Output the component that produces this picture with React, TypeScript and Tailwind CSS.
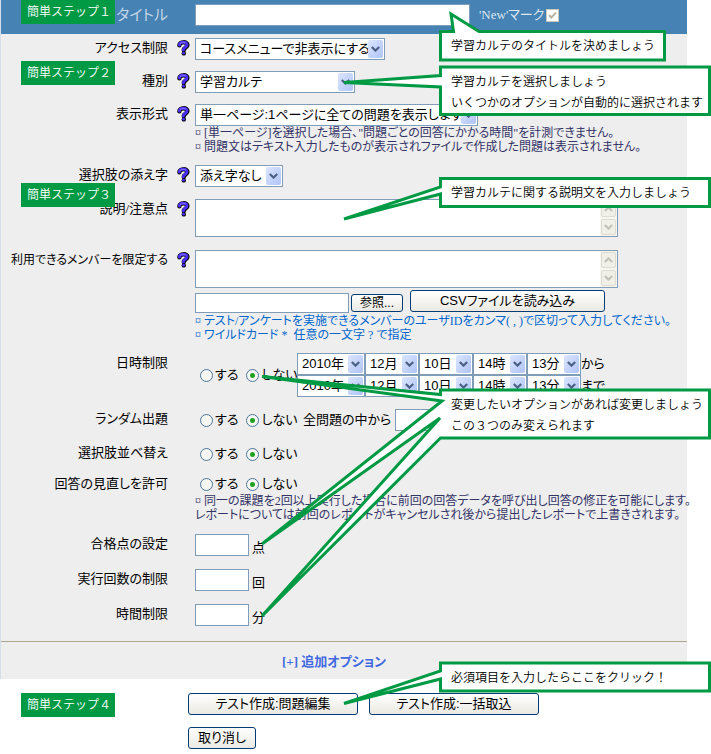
import { ReactNode } from "react";
import clsx from "clsx";

const serif = "font-['Liberation_Serif','Noto_Sans_CJK_JP',serif]";
const sans = "font-['Liberation_Sans','Noto_Sans_CJK_JP',sans-serif]";
const callout = "font-['Noto_Sans_CJK_JP',sans-serif] font-[350] [font-feature-settings:normal]";

const HelpIcon = () => (
    <svg width="13" height="16" viewBox="0 0 13 16" fill="none" strokeLinecap="round" strokeLinejoin="round" aria-hidden="true">
        <path d="M2.4 5.2C2.4 1.6 10.4 1.2 10.4 5C10.4 7.6 6.8 7.4 6.8 10" stroke="#000" strokeWidth="4.4" />
        <circle cx="6.8" cy="13.4" r="2.2" fill="#000" />
        <path d="M2.4 5C2.4 1.4 10 1.2 10 4.8C10 7.2 6.4 7.2 6.4 9.8" stroke="#4a2df5" strokeWidth="3" />
        <path d="M3 3.6C4.5 2 7 2 8.6 2.8" stroke="#9488ff" strokeWidth="0.8" />
        <circle cx="6.6" cy="13.2" r="1.4" fill="#4a2df5" />
    </svg>
);

const Chevron = ({ up = false, color = "#4d6185" }: { up?: boolean, color?: string }) => (
    <svg width="9" height="6" viewBox="0 0 9 6" fill="none" stroke={color} strokeWidth="2.2">
        <path d={up ? "M0.8 5L4.5 1.4L8.2 5" : "M0.8 1L4.5 4.6L8.2 1"} />
    </svg>
);

interface RowProps {
    label: string,
    htmlFor?: string,
    id?: string,
    help?: boolean,
    small?: boolean,
    className?: string,
    children: ReactNode
}

const Row = ({ label, htmlFor, id, help, small, className, children }: RowProps) => {
    return <div className={clsx("flex items-start", className)}>
        <label htmlFor={htmlFor} id={id} className={clsx("w-[167px] shrink-0 text-right whitespace-nowrap", small ? "text-xs/5" : "leading-5")}>{label}</label>
        <div className="flex w-[27px] h-5 shrink-0 items-center justify-center pl-1">{help && <HelpIcon />}</div>
        <div className="flex-1 min-w-0">{children}</div>
    </div>
}

const Select = ({ id, value, label, width }: { id?: string, value: string, label?: string, width: string }) => {
    return <div className={clsx("relative h-[22px] shrink-0", width)}>
        <select id={id} aria-label={label} defaultValue={value} className={clsx("block w-full h-full appearance-none border border-[#7f9db9] bg-white pl-1 text-[13px] leading-5 outline-none", sans)}>
            <option>{value}</option>
        </select>
        <span className="pointer-events-none absolute top-0.5 right-0.5 bottom-0.5 flex w-[15px] items-center justify-center rounded-xs bg-linear-to-br from-[#dbe5ff] to-[#afc4f5]">
            <Chevron />
        </span>
    </div>
}

const TextArea = ({ id }: { id: string }) => {
    return <div className="flex h-[38px] max-w-[423px] border border-[#7f9db9] bg-white">
        <textarea id={id} className="flex-1 resize-none overflow-hidden outline-none" />
        <div className="flex w-[17px] flex-col gap-0.5 bg-[#f7f6f1] p-px" aria-hidden="true">
            <span className="flex flex-1 items-center justify-center rounded-xs border border-[#dedccf] bg-[#f1f0e8]"><Chevron up color="#c5c3b8" /></span>
            <span className="flex flex-1 items-center justify-center rounded-xs border border-[#dedccf] bg-[#f1f0e8]"><Chevron color="#c5c3b8" /></span>
        </div>
    </div>
}

const Radio = ({ name, text, checked }: { name: string, text: string, checked?: boolean }) => {
    return <label className="flex items-center gap-0.5 whitespace-nowrap">
        <input
            type="radio"
            name={name}
            defaultChecked={checked}
            className="size-[13px] appearance-none rounded-full border border-[#4a769c] bg-[#f6f6f3] checked:bg-[radial-gradient(circle,#21a121_0,#21a121_2px,#f6f6f3_3px)]"
        />
        {text}
    </label>
}

const YesNo = ({ name, labelledBy }: { name: string, labelledBy: string }) => {
    return <div role="radiogroup" aria-labelledby={labelledBy} className="flex w-[102px] shrink-0 items-center gap-2 pl-[5px]">
        <Radio name={name} text="する" />
        <Radio name={name} text="しない" checked />
    </div>
}

const XpButton = ({ children, className }: { children: ReactNode, className: string }) => {
    return <button type="button" className={clsx("rounded-[3px] border border-[#003c74] bg-linear-to-b from-white to-[#eae9e2] whitespace-nowrap", sans, className)}>{children}</button>
}

const Notes = ({ lines, className }: { lines: string[], className: string }) => {
    return <div className={clsx("text-xs leading-[14px] whitespace-nowrap", className)}>
        {lines.map(line => <p key={line}>{line}</p>)}
    </div>
}

const NumberRow = ({ label, id, unit, className }: { label: string, id: string, unit: string, className: string }) => {
    return <Row label={label} htmlFor={id} className={className}>
        <div className="flex items-end gap-[3px]">
            <input id={id} type="text" className="h-[22px] w-[54px] border border-[#7f9db9] bg-white px-1 outline-none" />
            <span className="leading-4">{unit}</span>
        </div>
    </Row>
}

const Badge = ({ text, className }: { text: string, className: string }) => {
    return <div className={clsx("absolute left-[21px] h-6 w-[94px] bg-[#009944] pl-1.5 text-xs leading-[22px] whitespace-nowrap text-white", callout, className)}>{text}</div>
}

const Callout = ({ lines, className }: { lines: string[], className: string }) => {
    return <div className={clsx("absolute left-[451px] text-xs leading-[21px] whitespace-nowrap text-black", callout, className)}>
        {lines.map(line => <p key={line}>{line}</p>)}
    </div>
}

const bubbles = [
    "M440.5 31.5H453.5L451 14L479 31.5H664.5V60H440.5Z",
    "M440.5 67H709.5V114.5H440.5V87L344 82.5L440.5 75.5Z",
    "M440.5 178.5H709.5V206.5H440.5V194L344 219L440.5 187Z",
    "M440.5 390H709.5V438H440.5L262 616L440 418L262 544L442 401L262 376.5L440.5 394.5Z",
    "M440.5 663H709.5V691H440.5V679L344 703.5L440.5 671Z",
];

const dateParts = ["2010年", "12月", "10日", "14時", "13分"];
const units = ["年", "月", "日", "時", "分"];

const DateLine = ({ prefix, suffix }: { prefix: string, suffix: string }) => {
    return <div className="flex items-center">
        {dateParts.map((value, i) => (
            <Select key={value} value={value} label={prefix + units[i]} width={i === 0 ? "w-[68px]" : "w-[54px]"} />
        ))}
        <span className="whitespace-nowrap">{suffix}</span>
    </div>
}

export default function App() {
    return <div className={clsx("relative text-[13px] text-black [font-feature-settings:'palt']", serif)}>
        <form>
            <div className="mr-6 border-l border-[#d5dfea] bg-[#eeeeee]">
                <div className="flex h-[34px] items-center bg-[#4682b4] pb-1 text-[#dbe7f2]">
                    <label htmlFor="title" className="w-[167px] shrink-0 text-right text-[15px] text-[#c3d6e7]">タイトル</label>
                    <input id="title" type="text" className="ml-[27px] h-[22px] w-[275px] border border-[#7f9db9] bg-white px-1 text-black outline-none" />
                    <label htmlFor="newmark" className="ml-[9px] whitespace-nowrap">'New'マーク</label>
                    <input
                        id="newmark"
                        type="checkbox"
                        defaultChecked
                        disabled
                        className="ml-0.5 size-[13px] appearance-none border border-[#cac8bb] bg-white"
                    />
                    <svg className="pointer-events-none -ml-[11px]" width="9" height="9" viewBox="0 0 9 9" fill="none" stroke="#b5b3a6" strokeWidth="2" aria-hidden="true">
                        <path d="M1 4L3.3 6.5L8 1.6" />
                    </svg>
                </div>

                <Row label="アクセス制限" htmlFor="access" help className="mt-1">
                    <Select id="access" value="コースメニューで非表示にする" width="w-[190px]" />
                </Row>
                <Row label="種別" htmlFor="kind" help className="mt-[11px]">
                    <Select id="kind" value="学習カルテ" width="w-[160px]" />
                </Row>
                <Row label="表示形式" htmlFor="format" help className="mt-[11px]">
                    <Select id="format" value="単一ページ:1ページに全ての問題を表示します" width="w-[283px]" />
                    <Notes
                        className="text-[#333366]"
                        lines={[
                            "¤ [単一ページ]を選択した場合、\"問題ごとの回答にかかる時間\"を計測できません。",
                            "¤ 問題文はテキスト入力したものが表示されファイルで作成した問題は表示されません。",
                        ]}
                    />
                </Row>
                <Row label="選択肢の添え字" htmlFor="suffix" help className="mt-[11px]">
                    <Select id="suffix" value="添え字なし" width="w-[88px]" />
                </Row>
                <Row label="説明/注意点" htmlFor="description" help className="mt-3">
                    <TextArea id="description" />
                </Row>
                <Row label="利用できるメンバーを限定する" htmlFor="members" help small className="mt-[13px]">
                    <TextArea id="members" />
                    <div className="mt-0.5 flex h-6 items-start">
                        <input type="text" aria-label="CSVファイル" className="mt-[3px] h-5 w-[154px] border border-[#7f9db9] bg-white px-1 outline-none" />
                        <XpButton className="mt-1 ml-0.5 h-[18px] w-[52px] text-xs leading-4">参照...</XpButton>
                        <XpButton className="ml-[7px] h-[22px] w-[195px] leading-5">CSVファイルを読み込み</XpButton>
                    </div>
                    <Notes
                        className="text-[#0066cc]"
                        lines={[
                            "¤ テスト/アンケートを実施できるメンバーのユーザIDをカンマ( , )で区切って入力してください。",
                            "¤ ワイルドカード * \u00a0任意の一文字 ? で指定",
                        ]}
                    />
                </Row>
                <Row label="日時制限" id="period" className="mt-[11px]">
                    <div className="flex items-center">
                        <YesNo name="period" labelledBy="period" />
                        <div>
                            <DateLine prefix="開始" suffix="から" />
                            <DateLine prefix="終了" suffix="まで" />
                        </div>
                    </div>
                </Row>
                <Row label="ランダム出題" id="random" className="mt-3">
                    <div className="flex items-center">
                        <YesNo name="random" labelledBy="random" />
                        <label htmlFor="count" className="ml-1.5 whitespace-nowrap">全問題の中から</label>
                        <input id="count" type="text" className="ml-1 h-[22px] w-[54px] border border-[#7f9db9] bg-white px-1 outline-none" />
                    </div>
                </Row>
                <Row label="選択肢並べ替え" id="shuffle" className="mt-3">
                    <div className="flex h-[22px]"><YesNo name="shuffle" labelledBy="shuffle" /></div>
                </Row>
                <Row label="回答の見直しを許可" id="review" className="mt-[9px]">
                    <div className="flex h-5"><YesNo name="review" labelledBy="review" /></div>
                    <Notes
                        className="text-[#333366]"
                        lines={[
                            "¤ 同一の課題を2回以上実行した場合に前回の回答データを呼び出し回答の修正を可能にします。",
                            "レポートについては前回のレポートがキャンセルされ後から提出したレポートで上書きされます。",
                        ]}
                    />
                </Row>
                <NumberRow label="合格点の設定" id="pass" unit="点" className="mt-3" />
                <NumberRow label="実行回数の制限" id="times" unit="回" className="mt-[13px]" />
                <NumberRow label="時間制限" id="limit" unit="分" className="mt-[13px]" />

                <div className="mt-[15px] border-t border-[#aca88f] pt-2.5 pr-5 pb-[7px] text-center leading-5">
                    <a href="#options" className="font-bold text-[#4169e1]">[+] 追加オプション</a>
                </div>
            </div>

            <div className="mt-3.5 ml-[188px] flex gap-[11px]">
                <XpButton className="h-[22px] w-[170px] leading-5">テスト作成:問題編集</XpButton>
                <XpButton className="h-[22px] w-[170px] leading-5">テスト作成:一括取込</XpButton>
            </div>
            <XpButton className="mt-3 ml-[188px] block h-[22px] w-[68px] leading-5">取り消し</XpButton>
        </form>

        <Badge text="簡単ステップ１" className="top-0" />
        <Badge text="簡単ステップ２" className="top-[61px]" />
        <Badge text="簡単ステップ３" className="top-[183px]" />
        <Badge text="簡単ステップ４" className="top-[693px]" />

        <svg className="pointer-events-none absolute top-0 left-0" width="711" height="754" viewBox="0 0 711 754" fill="#fff" stroke="#009944" strokeWidth="3" strokeLinejoin="miter" strokeMiterlimit="4" aria-hidden="true">
            {bubbles.map(d => <path key={d} d={d} />)}
        </svg>
        <Callout className="top-[34px]" lines={["学習カルテのタイトルを決めましょう"]} />
        <Callout className="top-[70px]" lines={["学習カルテを選択しましょう", "いくつかのオプションが自動的に選択されます"]} />
        <Callout className="top-[181px]" lines={["学習カルテに関する説明文を入力しましょう"]} />
        <Callout className="top-[393px]" lines={["変更したいオプションがあれば変更しましょう", "この３つのみ変えられます"]} />
        <Callout className="top-[666px]" lines={["必須項目を入力したらここをクリック！"]} />
    </div>
}
